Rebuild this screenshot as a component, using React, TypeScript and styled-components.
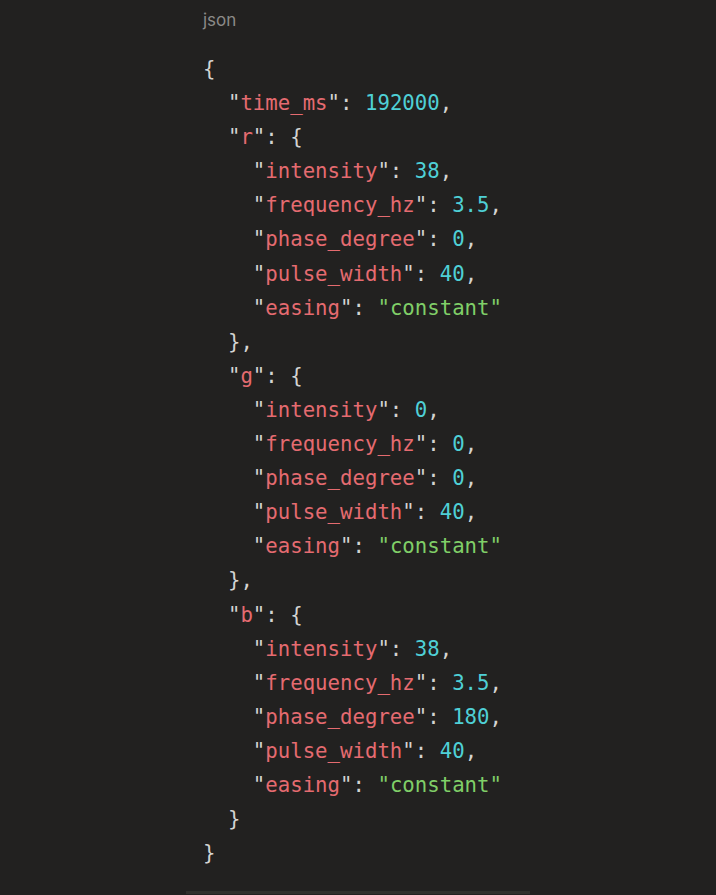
import React from "react";
import styled, { createGlobalStyle } from "styled-components";

const Global = createGlobalStyle`
  html, body { margin: 0; padding: 0; background: #222120; }
  body { font-family: "Inter", "Noto Sans", sans-serif; }
`;

const Page = styled.div`
  min-height: 895px;
  background: #222120;
  display: flex;
  justify-content: center;
`;

const Block = styled.div`
  width: 344px;
  box-sizing: border-box;
  padding: 8px 0 0 17px;
  display: flex;
  flex-direction: column;
  border-bottom: 3px solid #302f2c;
  height: 894px;
`;

const Lang = styled.div`
  font-family: "Inter", "Noto Sans", sans-serif;
  font-size: 17px;
  line-height: 24px;
  color: #8b8a88;
`;

const Code = styled.pre`
  margin: 20px 0 0 0;
  font-family: "DejaVu Sans Mono", "Liberation Mono", monospace;
  font-size: 20.7px;
  line-height: 34.1px;
  color: #d4d4d2;
  white-space: pre;
`;

type Kind = "key" | "num" | "str" | "punc";
const Tok = styled.span<{ $k: Kind }>`
  color: ${(p) =>
    p.$k === "key"
      ? "#e56b70"
      : p.$k === "num"
      ? "#4fd0d6"
      : p.$k === "str"
      ? "#80cf68"
      : "#d4d4d2"};
`;

type Val = number | string | { [k: string]: Val };

const channel = (i: number, f: number, ph: number) => ({
  intensity: i,
  frequency_hz: f,
  phase_degree: ph,
  pulse_width: 40,
  easing: "constant",
});

const data: { [k: string]: Val } = {
  time_ms: 192000,
  r: channel(38, 3.5, 0),
  g: channel(0, 0, 0),
  b: channel(38, 3.5, 180),
};

function render(obj: { [k: string]: Val }, depth: number): React.ReactNode[] {
  const out: React.ReactNode[] = [];
  const entries = Object.entries(obj);
  entries.forEach(([k, v], idx) => {
    const ind = "  ".repeat(depth + 1);
    const comma = idx < entries.length - 1 ? "," : "";
    const keyPart = (
      <>
        {ind}"<Tok $k="key">{k}</Tok>":{" "}
      </>
    );
    if (typeof v === "object") {
      out.push(
        <React.Fragment key={`${depth}-${k}-o`}>
          {keyPart}
          {"{\n"}
        </React.Fragment>
      );
      out.push(...render(v, depth + 1));
      out.push(
        <React.Fragment key={`${depth}-${k}-c`}>
          {ind}
          {"}"}
          {comma}
          {"\n"}
        </React.Fragment>
      );
    } else {
      out.push(
        <React.Fragment key={`${depth}-${k}`}>
          {keyPart}
          {typeof v === "number" ? (
            <Tok $k="num">{v}</Tok>
          ) : (
            <Tok $k="str">"{v}"</Tok>
          )}
          {comma}
          {"\n"}
        </React.Fragment>
      );
    }
  });
  return out;
}

export default function App() {
  return (
    <>
      <Global />
      <Page>
        <Block>
          <Lang>json</Lang>
          <Code>
            {"{\n"}
            {render(data, 0)}
            {"}"}
          </Code>
        </Block>
      </Page>
    </>
  );
}
